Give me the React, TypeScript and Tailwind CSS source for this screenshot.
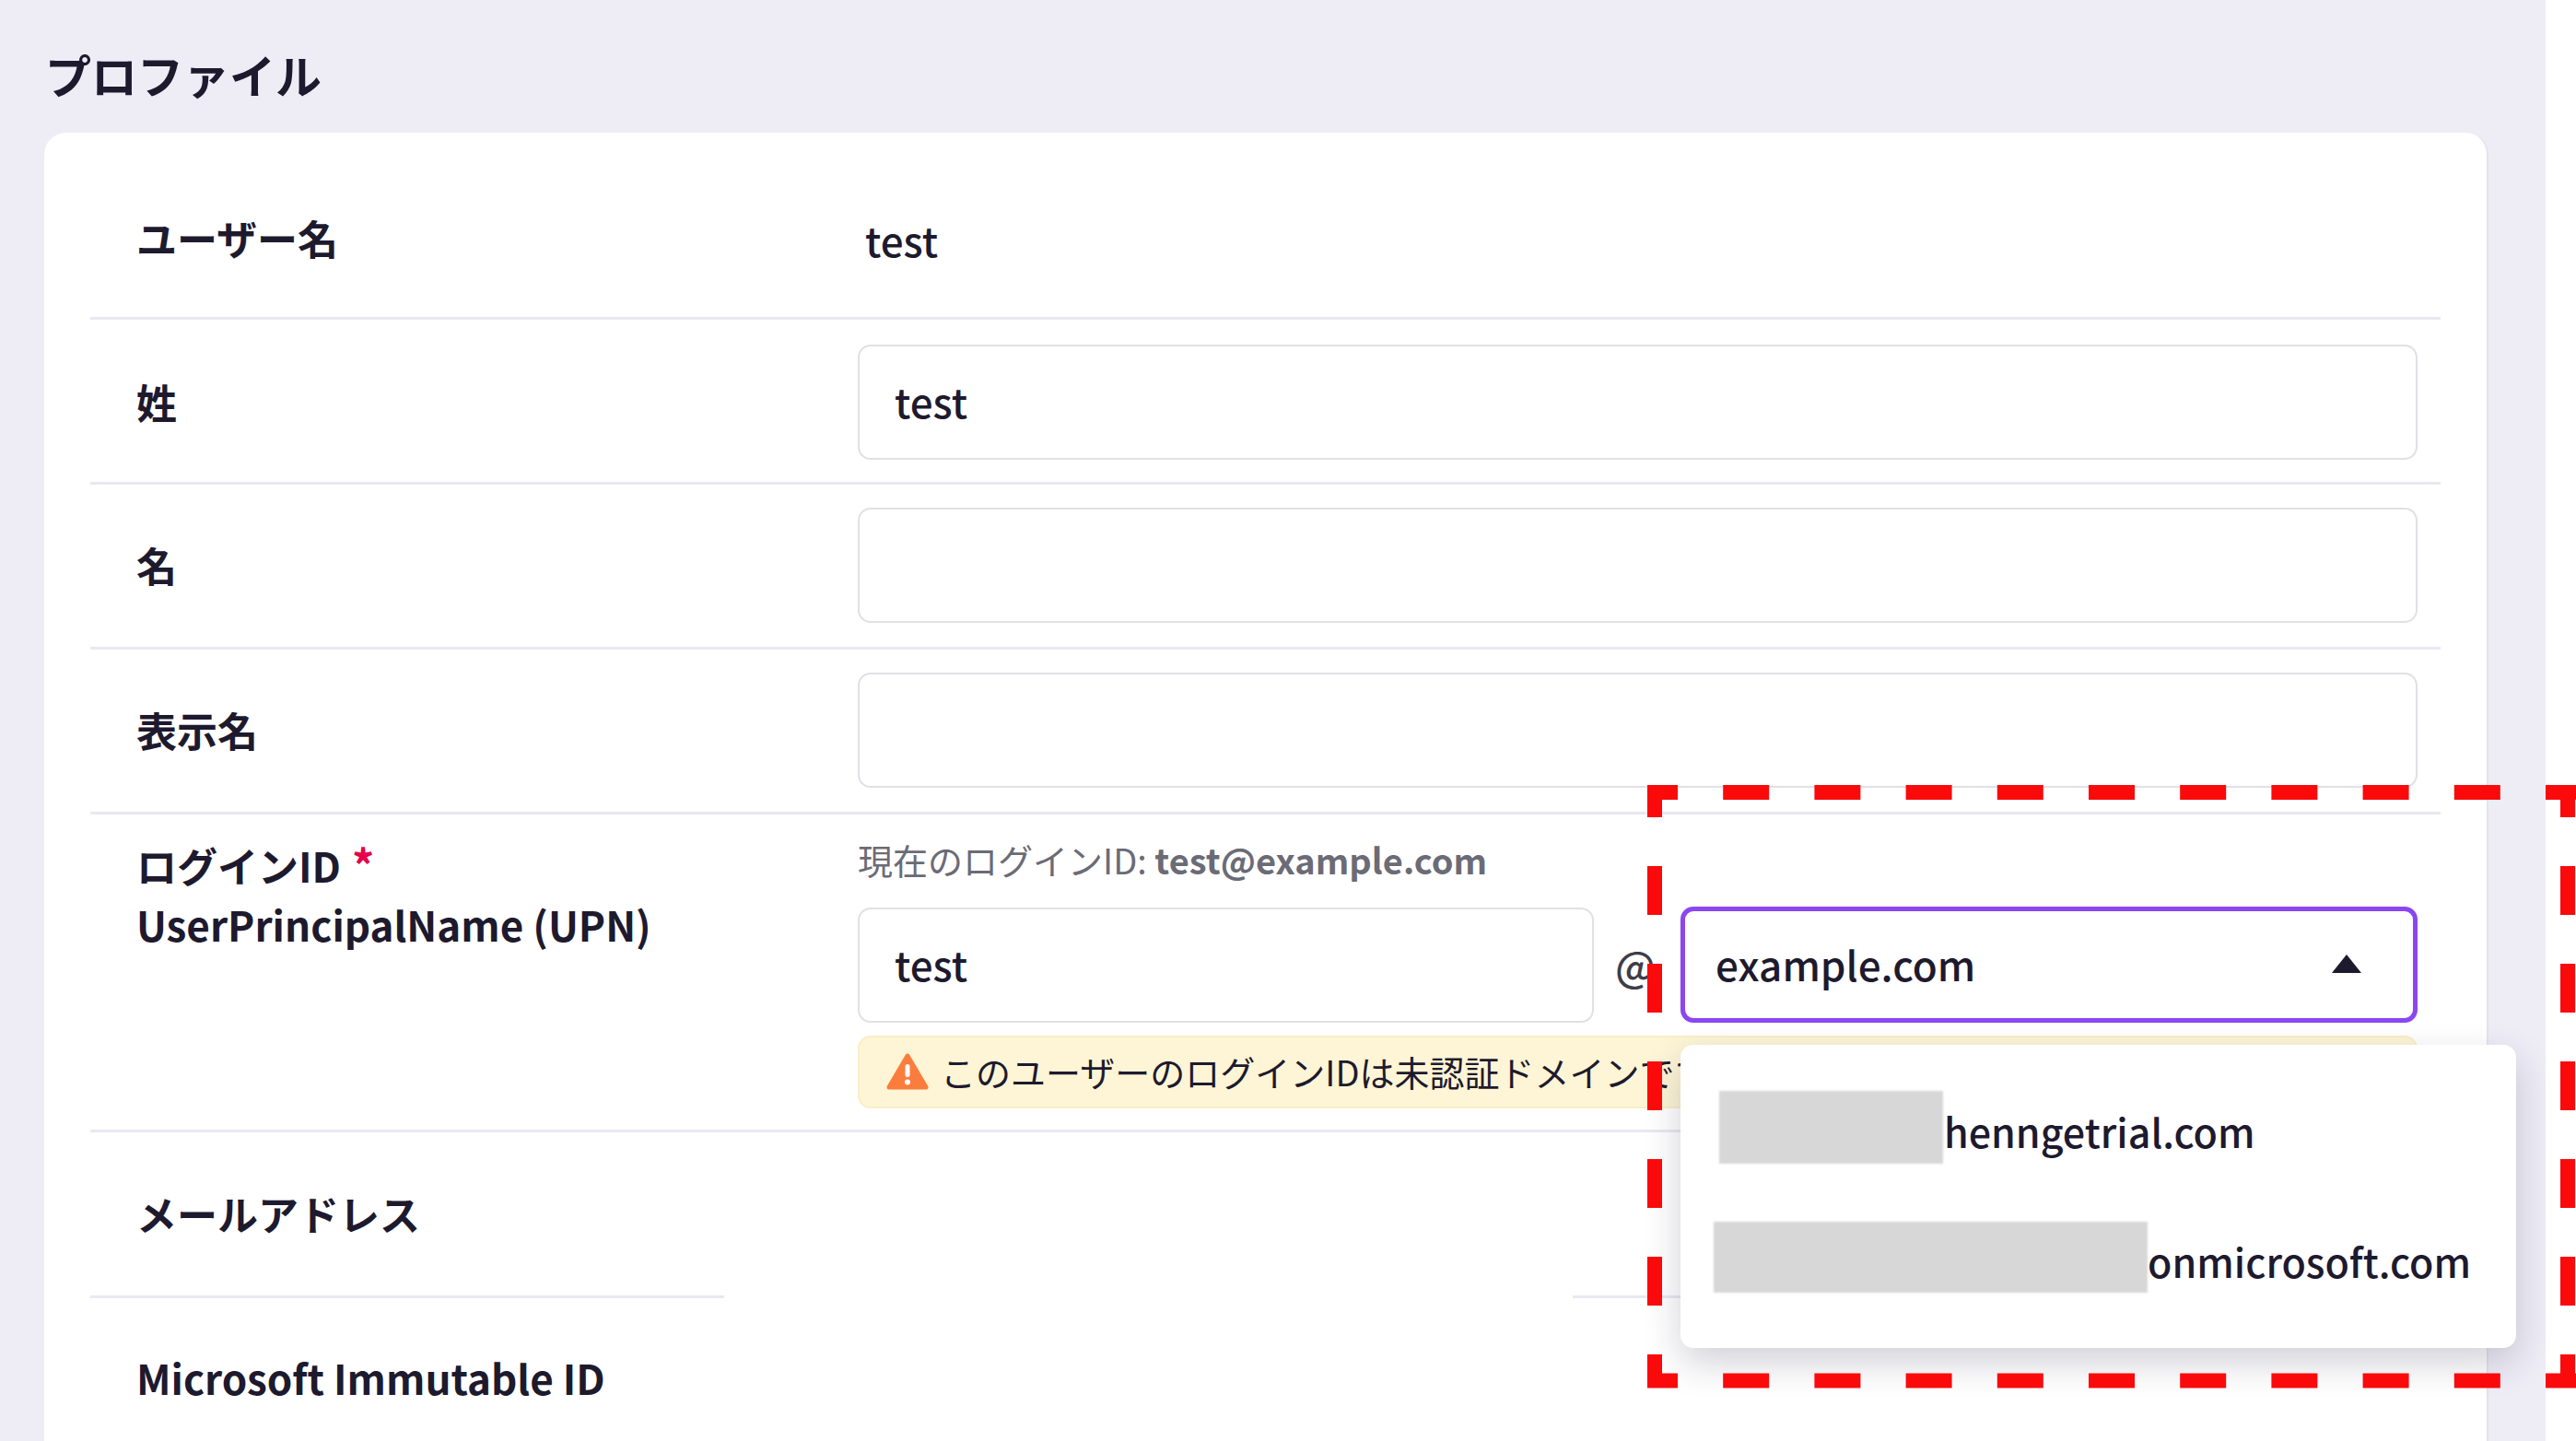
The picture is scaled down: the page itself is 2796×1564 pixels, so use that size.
import React from 'react';

const FONT = { fontFamily: '"Noto Sans CJK JP", "Noto Sans", sans-serif' };

function Row({ label, className, children }: { label: string; className: string; children?: React.ReactNode }) {
  return (
    <div className={`flex h-[179px] items-center border-b-[3px] border-[#e9e8f2] ${className}`}>
      <div className="w-[833px] pl-[50px] text-[44px] font-bold leading-[64px]">{label}</div>
      {children}
    </div>
  );
}

function TextBox({ value, className }: { value?: string; className: string }) {
  return (
    <div className={`flex h-[125px] items-center rounded-[14px] border-2 border-[#e0e0e6] bg-white pb-[2px] pl-[38px] text-[44px] font-medium ${className}`}>
      {value}
    </div>
  );
}

function WarningIcon() {
  return (
    <svg width="46" height="42" viewBox="0 0 46 42" className="shrink-0">
      <path d="M23 4 L43 38 L3 38 Z" fill="#fb7d3e" stroke="#fb7d3e" strokeWidth="5" strokeLinejoin="round" />
      <rect x="20.5" y="13" width="5" height="14" rx="2.5" fill="#fff" />
      <circle cx="23" cy="32.5" r="3" fill="#fff" />
    </svg>
  );
}

function DomainMenu() {
  return (
    <div className="absolute left-[-5px] top-[145px] z-10 h-[329px] w-[907px] rounded-[14px] bg-white shadow-[0_16px_40px_rgba(30,25,60,0.2)]">
      <div className="flex h-[164px] items-center pl-[42px] pt-[22px]">
        <div className="mb-[8px] h-[79px] w-[243px] bg-[#d7d7d7] blur-[1px]" />
        <span className="ml-[1px] text-[43px] font-medium leading-[64px]">henngetrial.com</span>
      </div>
      <div className="flex h-[120px] items-center pl-[36px] pt-[20px]">
        <div className="mb-[8px] h-[77px] w-[471px] bg-[#d7d7d7] blur-[1px]" />
        <span className="text-[43px] font-medium leading-[64px]">onmicrosoft.com</span>
      </div>
    </div>
  );
}

// red annotation drawn over the screenshot
function DashedFrame() {
  const red = '#fa0a0a';
  return (
    <svg width="2796" height="1564" className="absolute left-0 top-0 z-20">
      <line x1="1788" y1="860" x2="2796" y2="860" stroke={red} strokeWidth="16" strokeDasharray="50 49.2" strokeDashoffset="17" />
      <line x1="1788" y1="1498.5" x2="2796" y2="1498.5" stroke={red} strokeWidth="16" strokeDasharray="50 49.2" strokeDashoffset="17" />
      <line x1="1796" y1="852" x2="1796" y2="1506" stroke={red} strokeWidth="16" strokeDasharray="53 53" strokeDashoffset="18" />
      <line x1="2787" y1="852" x2="2787" y2="1506" stroke={red} strokeWidth="16" strokeDasharray="53 53" strokeDashoffset="18" />
    </svg>
  );
}

export default function App() {
  return (
    <div className="relative h-[1564px] w-[2796px] overflow-hidden bg-white text-[#1e1a2e]" style={FONT}>
      <div className="h-[1564px] w-[2763px] bg-[#eeedf6] pl-[48px]">
        <div className="flex h-[144px] items-start pl-[1px] pt-[44px] text-[50px] font-bold leading-[72px]">プロファイル</div>
        <div className="h-[1420px] w-[2653px] rounded-t-[24px] border-r-2 border-[#e4e3ee] bg-white px-[50px]">
          <div className="flex h-[203px] items-center border-b-[3px] border-[#e9e8f2] pt-[27px]">
            <div className="w-[833px] pl-[50px] text-[44px] font-bold leading-[64px]">ユーザー名</div>
            <div className="pl-[8px] pt-[5px] text-[44px] font-medium leading-[64px]">test</div>
          </div>
          <Row label="姓" className="pt-[2px]"><TextBox value="test" className="w-[1693px]" /></Row>
          <Row label="名" className="pb-[2px]"><TextBox className="w-[1693px]" /></Row>
          <Row label="表示名" className="pb-[2px]"><TextBox className="w-[1693px]" /></Row>

          <div className="flex h-[345px] items-start border-b-[3px] border-[#e9e8f2]">
            <div className="w-[833px] pl-[50px] pt-[23px] text-[44px] font-bold leading-[64px]">
              <div>ログインID <span className="ml-[2px] text-[48px] leading-[48px] text-[#e6004c]">*</span></div>
              <div>UserPrincipalName (UPN)</div>
            </div>
            <div className="w-[1693px] pt-[21px]">
              <div className="text-[38px] leading-[56px] text-[#6b6b76]">
                現在のログインID: <span className="font-bold">test@example.com</span>
              </div>
              <div className="mt-[23px] flex items-center">
                <TextBox value="test" className="w-[799px]" />
                <div className="w-[94px] pl-[23px] text-[45px] font-medium text-[#3f3d4a]">@</div>
                <div className="relative flex h-[126px] w-[800px] items-center justify-between rounded-[14px] border-[5px] border-[#8b46f0] pb-[2px] pl-[33px] pr-[56px] text-[44px] font-medium">
                  example.com
                  <svg width="32" height="20" viewBox="0 0 32 20"><path d="M16 0 L32 20 L0 20 Z" fill="#1e1a2e" /></svg>
                  <DomainMenu />
                </div>
              </div>
              <div className="mt-[14px] flex h-[79px] items-center gap-[13px] overflow-hidden whitespace-nowrap rounded-[14px] border-2 border-[#faeec8] bg-[#fdf5d5] pb-[2px] pl-[29px] text-[38px]">
                <WarningIcon />
                このユーザーのログインIDは未認証ドメインです。
              </div>
            </div>
          </div>

          <div className="flex h-[177px] items-center pb-[1px]">
            <div className="w-[833px] pl-[50px] text-[44px] font-bold leading-[64px]">メールアドレス</div>
          </div>
          <div className="flex justify-between">
            <div className="h-[3px] w-[688px] bg-[#e9e8f2]" />
            <div className="h-[3px] w-[942px] bg-[#e9e8f2]" />
          </div>
          <div className="flex h-[179px] items-center pb-[8px]">
            <div className="w-[833px] pl-[50px] text-[44px] font-bold leading-[64px]">Microsoft Immutable ID</div>
          </div>
        </div>
      </div>
      <DashedFrame />
    </div>
  );
}
